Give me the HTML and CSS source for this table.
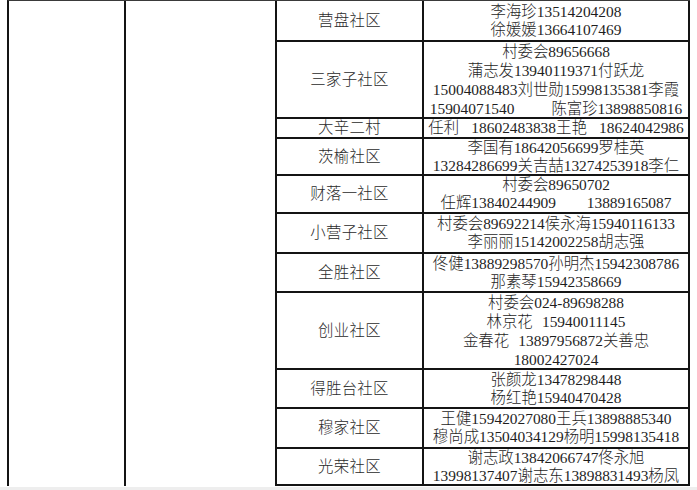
FILE: index.html
```html
<!DOCTYPE html>
<html lang="zh-CN">
<head>
<meta charset="utf-8">
<title>社区联系人</title>
<link rel="stylesheet" href="styles.css">
</head>
<body>
<div class="page">
  <div class="sheet">
    <div class="cell span-all c1"></div>
    <div class="cell span-all c2"></div>

    <div class="cell name r1">营盘社区</div>
    <div class="cell info r1"><div>李海珍13514204208</div><div>徐媛媛13664107469</div></div>

    <div class="cell name r2">三家子社区</div>
    <div class="cell info r2 tall"><div>村委会89656668</div><div>蒲志发13940119371付跃龙</div><div>15004088483刘世勋15998135381李霞</div><div>15904071540<span class="sp sp25"></span>陈富珍13898850816</div></div>

    <div class="cell name r3">大辛二村</div>
    <div class="cell info r3"><div>任利<span class="sp sp1"></span>18602483838王艳<span class="sp sp1"></span>18624042986</div></div>

    <div class="cell name r4">茨榆社区</div>
    <div class="cell info r4"><div>李国有18642056699罗桂英</div><div>13284286699关吉喆13274253918李仁</div></div>

    <div class="cell name r5">财落一社区</div>
    <div class="cell info r5"><div>村委会89650702</div><div>任辉13840244909<span class="sp sp2"></span>13889165087</div></div>

    <div class="cell name r6">小营子社区</div>
    <div class="cell info r6"><div>村委会89692214侯永海15940116133</div><div>李丽丽15142002258胡志强</div></div>

    <div class="cell name r7">全胜社区</div>
    <div class="cell info r7"><div>佟健13889298570孙明杰15942308786</div><div>那素琴15942358669</div></div>

    <div class="cell name r8">创业社区</div>
    <div class="cell info r8 tall"><div>村委会024-89698288</div><div>林京花<span class="sp sph"></span>15940011145</div><div>金春花<span class="sp sph"></span>13897956872关善忠</div><div>18002427024</div></div>

    <div class="cell name r9">得胜台社区</div>
    <div class="cell info r9"><div>张颜龙13478298448</div><div>杨红艳15940470428</div></div>

    <div class="cell name r10">穆家社区</div>
    <div class="cell info r10"><div>王健15942027080王兵13898885340</div><div>穆尚成13504034129杨明15998135418</div></div>

    <div class="cell name r11">光荣社区</div>
    <div class="cell info r11"><div>谢志政13842066747佟永旭</div><div>13998137407谢志东13898831493杨凤</div></div>
  </div>
</div>
</body>
</html>
```

FILE: styles.css
```css
html, body {
  margin: 0;
  padding: 0;
}

body {
  background: #eeeeee;
  width: 697px;
  height: 490px;
  overflow: hidden;
  font-family: "Liberation Serif", "Noto Sans CJK SC", serif;
  font-size: 15.4px;
  font-weight: 300;
  color: #1e1e1e;
}

.page {
  background: #ffffff;
  height: 487px;
  padding-left: 7px;
}

.sheet {
  display: grid;
  grid-template-columns: 117px 151px 147px 266px;
  grid-template-rows: 41px 77px 20px 37px 38px 40px 39px 77px 39px 40px 37px;
  width: 683px;
  border-left: 2px solid #141414;
  border-top: 1px solid #3a3a3a;
  box-sizing: border-box;
}

.cell {
  box-sizing: border-box;
  border-right: 2px solid #141414;
  border-bottom: 2px solid #141414;
  display: flex;
  flex-direction: column;
  align-items: center;
  justify-content: center;
  text-align: center;
  white-space: nowrap;
  line-height: 18px;
  overflow: visible;
}

.span-all {
  grid-row: 1 / span 11;
  border-bottom: none;
}

.c1 { grid-column: 1; }
.c2 { grid-column: 2; }
.name { grid-column: 3; letter-spacing: 0.3px; color: #2a2a2a; }
.info { grid-column: 4; }

.r1 { grid-row: 1; }
.r2 { grid-row: 2; }
.r3 { grid-row: 3; }
.r4 { grid-row: 4; }
.r5 { grid-row: 5; }
.r6 { grid-row: 6; }
.r7 { grid-row: 7; }
.r8 { grid-row: 8; }
.r9 { grid-row: 9; }
.r10 { grid-row: 10; }
.r11 { grid-row: 11; }

.tall { line-height: 19px; }

.sp { display: inline-block; }
.sph { width: 0.6em; }
.sp1 { width: 0.8em; }
.sp2 { width: 2em; }
.sp25 { width: 2.4em; }
```
